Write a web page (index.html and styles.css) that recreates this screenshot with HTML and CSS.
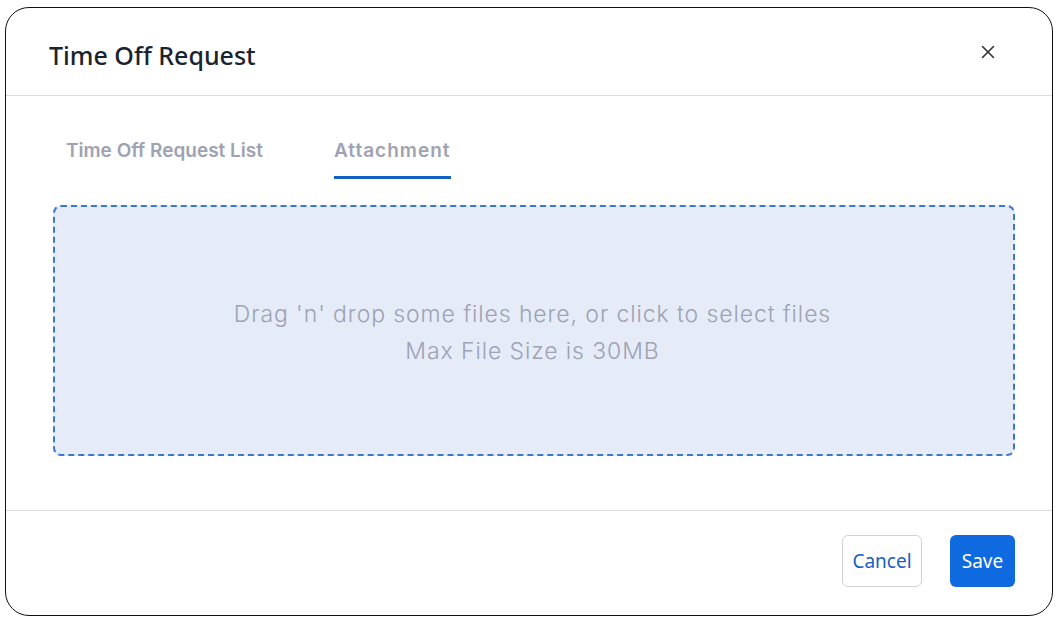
FILE: index.html
```html
<!doctype html>
<html lang="en">
  <head>
    <meta charset="UTF-8" />
    <meta name="viewport" content="width=device-width, initial-scale=1.0" />
    <title>Time Off Request</title>
    <link rel="stylesheet" href="styles.css">
  </head>

  <body>
    <div class="modal">
      <header class="modal-header">
        <h2>Time Off Request</h2>
        <button class="close" aria-label="Close">
          <svg width="14" height="14" viewBox="0 0 14 14" fill="none" stroke="currentColor" stroke-width="1.6" stroke-linecap="round">
            <line x1="1.5" y1="1.5" x2="12.5" y2="12.5" />
            <line x1="12.5" y1="1.5" x2="1.5" y2="12.5" />
          </svg>
        </button>
      </header>
      <div class="modal-body">
        <nav class="tabs">
          <button class="tab">Time Off Request List</button>
          <button class="tab active">Attachment</button>
        </nav>
        <div class="dropzone">
          <p>Drag 'n' drop some files here, or click to select files</p>
          <p>Max File Size is 30MB</p>
        </div>
      </div>
      <footer class="modal-footer">
        <button class="btn btn-outline">Cancel</button>
        <button class="btn btn-primary">Save</button>
      </footer>
    </div>
  </body>
</html>
```

FILE: styles.css
```css
:root {
  --blue-primary: #0f6ae0;
  --blue-text: #1560c4;
  --muted: #9ea2b3;
}

* {
  box-sizing: border-box;
}

body {
  margin: 0;
  padding: 7px 7px 8px 5px;
  background: #fff;
  font-family: "Open Sans", "Noto Sans", sans-serif;
}

.modal {
  width: 1048px;
  height: 609px;
  border: 1.5px solid #111;
  border-radius: 24px;
  background: #fff;
  display: flex;
  flex-direction: column;
}

.modal-header {
  display: flex;
  justify-content: space-between;
  align-items: center;
  height: 88px;
  padding: 6px 53px 0 43px;
  border-bottom: 1px solid #dcdcdc;
}

.modal-header h2 {
  margin: 0;
  font-family: "Noto Sans", "Open Sans", sans-serif;
  font-size: 25px;
  font-weight: 500;
  color: #1b232e;
}

.close {
  border: none;
  background: none;
  padding: 4px;
  margin-top: -6px;
  color: #333;
  display: flex;
}

.modal-body {
  flex: 1;
  padding: 0 37px 0 47px;
}

.tabs {
  display: flex;
  gap: 71px;
  padding-left: 13px;
  margin-top: 34px;
}

.tab {
  border: none;
  background: none;
  padding: 9px 0 14px;
  font-family: "Inter", "Open Sans", sans-serif;
  font-size: 19px;
  font-weight: 600;
  color: var(--muted);
  border-bottom: 3px solid transparent;
}

.tab.active {
  letter-spacing: 1px;
  border-bottom-color: var(--blue-text);
}

.dropzone {
  margin-top: 26px;
  height: 251px;
  border: 2px dashed #3a78cf;
  border-radius: 8px;
  background: #e5ecf8;
  display: flex;
  flex-direction: column;
  justify-content: center;
  align-items: center;
  padding: 4px 3px 0 0;
  font-family: "Inter", "Open Sans", sans-serif;
  font-size: 23px;
  font-weight: 300;
  letter-spacing: 0.9px;
  color: var(--muted);
}

.dropzone p {
  margin: 0;
  line-height: 37px;
}

.modal-footer {
  display: flex;
  justify-content: flex-end;
  align-items: center;
  gap: 28px;
  height: 105px;
  padding: 0 37px 4px 0;
  border-top: 1px solid #dcdcdc;
}

.btn {
  height: 52px;
  padding: 0;
  border-radius: 6px;
  font-family: "Noto Sans", "Open Sans", sans-serif;
  font-size: 19px;
}

.btn-outline {
  width: 80px;
  border: 1px solid #cfd3d8;
  background: #fff;
  color: var(--blue-text);
}

.btn-primary {
  width: 65px;
  border: none;
  background: var(--blue-primary);
  color: #fff;
}
```
